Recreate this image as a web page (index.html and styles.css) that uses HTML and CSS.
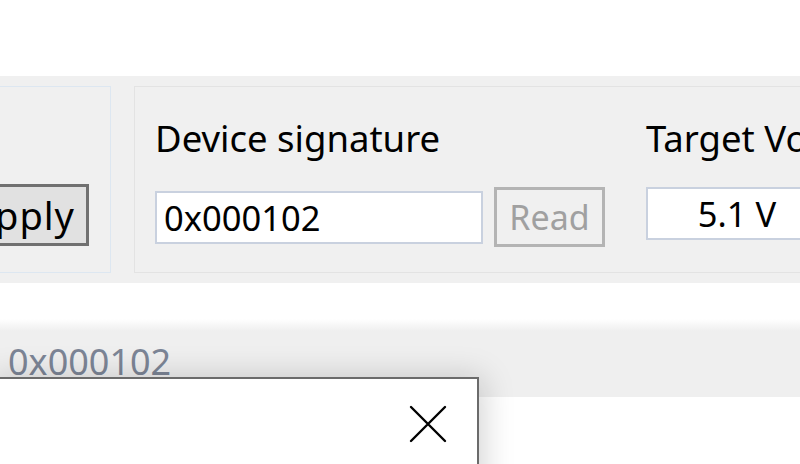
FILE: index.html
```html
<!DOCTYPE html>
<html>
<head>
<meta charset="utf-8">
<link rel="stylesheet" href="styles.css">
</head>
<body>
<div class="top"></div>
<div class="panel">
  <div class="group group-left">
    <button class="btn btn-apply">Apply</button>
  </div>
  <div class="group group-main">
    <div class="field">
      <div class="label">Device signature</div>
      <div class="row">
        <div class="textbox tb-sig">0x000102</div>
        <button class="btn btn-read" disabled>Read</button>
      </div>
    </div>
    <div class="field">
      <div class="label">Target Voltage</div>
      <div class="row">
        <div class="textbox tb-volt">5.1 V</div>
      </div>
    </div>
  </div>
</div>
<div class="strip">
  <div class="strip-text">0x000102</div>
</div>
<div class="popup">
  <svg class="close" width="40" height="40" viewBox="0 0 40 40">
    <path d="M3 3 L37 37 M37 3 L3 37" stroke="#000" stroke-width="2.4" stroke-linecap="round" fill="none"/>
  </svg>
</div>
</body>
</html>
```

FILE: styles.css
```css
html, body {
  margin: 0;
  padding: 0;
  background: #ffffff;
  overflow: hidden;
  width: 800px;
  height: 464px;
  position: relative;
  font-family: "Noto Sans", "Open Sans", sans-serif;
}

.top {
  height: 76px;
}

.panel {
  height: 207px;
  background: #f0f0f0;
  display: flex;
  align-items: flex-start;
  padding-top: 10px;
  box-sizing: border-box;
}

.group {
  height: 187px;
  box-sizing: border-box;
  flex-shrink: 0;
}

.group-left {
  margin-left: -20px;
  width: 131px;
  border: 1px solid #dde7f1;
  display: flex;
  flex-direction: column;
  align-items: flex-end;
  padding-top: 97px;
  padding-right: 21px;
}

.group-main {
  margin-left: 23px;
  width: 760px;
  border: 1px solid #e3e3e3;
  display: flex;
  padding-left: 20px;
  padding-top: 28px;
  gap: 41px;
}

.btn {
  font-family: "Noto Sans", "Open Sans", sans-serif;
  font-size: 34px;
  box-sizing: border-box;
  padding: 0;
  margin: 0;
}

.btn-apply {
  width: 130px;
  height: 62px;
  background: #e1e1e1;
  border: 3px solid #707070;
  color: #000;
  text-align: right;
  padding-right: 11px;
  font-size: 38px;
  letter-spacing: 1px;
  white-space: nowrap;
  overflow: hidden;
}

.label {
  font-size: 36.5px;
  line-height: 46px;
  color: #000;
  white-space: nowrap;
}

.row {
  display: flex;
  align-items: center;
  margin-top: 26px;
  gap: 11px;
}

.textbox {
  box-sizing: border-box;
  height: 53px;
  border: 2px solid #c9d1df;
  background: #ffffff;
  font-size: 34.5px;
  line-height: 50px;
  color: #000;
  white-space: nowrap;
}

.tb-sig {
  width: 328px;
  padding-left: 7px;
}

.tb-volt {
  width: 182px;
  text-align: center;
}

.btn-read {
  width: 111px;
  height: 60px;
  background: #f0f0f0;
  border: 3px solid #b4b4b4;
  color: #a0a0a0;
}

.strip {
  margin-top: 36px;
  height: 78px;
  background: linear-gradient(to bottom, #ffffff 0px, #efefef 12px, #efefef 100%);
  position: relative;
}

.strip-text {
  font-size: 36px;
  color: #7c8596;
  padding-left: 8px;
  padding-top: 20px;
  line-height: 46px;
}

.popup {
  position: absolute;
  left: -10px;
  top: 377px;
  width: 489px;
  height: 120px;
  background: #ffffff;
  border: 2px solid #6b6b6b;
  box-sizing: border-box;
  box-shadow: 4px 0 30px rgba(0, 0, 0, 0.18);
}

.close {
  position: absolute;
  left: 416px;
  top: 25px;
}
```
